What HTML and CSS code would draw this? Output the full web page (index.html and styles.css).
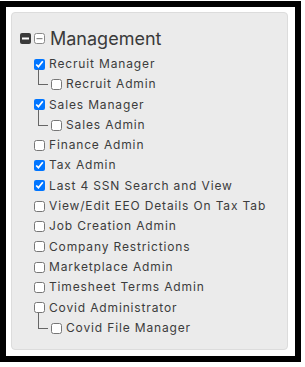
FILE: index.html
```html
<!DOCTYPE html>
<html lang="en">
<head>
    <meta charset="UTF-8">
    <title>Management</title>
    <link rel="stylesheet" href="styles.css">
</head>
<body>
    <div class="frame">
        <div class="panel">
            <div class="group-head">
                <span class="tog">
                    <svg width="11" height="11" viewBox="0 0 11 11"><rect x="0" y="0" width="11" height="11" rx="2" fill="#3a3a3a"/><rect x="2" y="4.5" width="7" height="2" fill="#fff"/></svg>
                </span>
                <span class="tog">
                    <svg width="11" height="11" viewBox="0 0 11 11"><rect x="0.5" y="0.5" width="10" height="10" rx="2" fill="#fff" stroke="#8a8a8a"/><rect x="2.5" y="5" width="6" height="1.2" fill="#8a8a8a"/></svg>
                </span>
                <span class="title">Management</span>
            </div>

            <ul class="perms">
                <li><label><input type="checkbox" checked>Recruit Manager</label>
                    <ul class="sub">
                        <li><label><input type="checkbox">Recruit Admin</label></li>
                    </ul>
                </li>
                <li><label><input type="checkbox" checked>Sales Manager</label>
                    <ul class="sub">
                        <li><label><input type="checkbox">Sales Admin</label></li>
                    </ul>
                </li>
                <li><label><input type="checkbox">Finance Admin</label></li>
                <li><label><input type="checkbox" checked>Tax Admin</label></li>
                <li><label><input type="checkbox" checked>Last 4 SSN Search and View</label></li>
                <li><label><input type="checkbox">View/Edit EEO Details On Tax Tab</label></li>
                <li><label><input type="checkbox">Job Creation Admin</label></li>
                <li><label><input type="checkbox">Company Restrictions</label></li>
                <li><label><input type="checkbox">Marketplace Admin</label></li>
                <li><label><input type="checkbox">Timesheet Terms Admin</label></li>
                <li><label><input type="checkbox">Covid Administrator</label>
                    <ul class="sub">
                        <li><label><input type="checkbox">Covid File Manager</label></li>
                    </ul>
                </li>
            </ul>
        </div>
    </div>
</body>
</html>
```

FILE: styles.css
```css
body {
    margin: 0;
    background-color: #fff;
    font-family: Inter, "Open Sans", sans-serif;
    color: #3c3c3c;
}
.frame {
    box-sizing: border-box;
    width: 301px;
    margin-top: 1px;
    border: 6px solid #000;
    padding: 5px 7px 6px 5px;
}
.panel {
    box-sizing: border-box;
    height: 338px;
    background-color: #ebebeb;
    border: 1px solid #dcdcdc;
    border-radius: 4px;
    padding: 14px 8px 0 8px;
}
.group-head {
    display: flex;
    align-items: center;
    gap: 2px;
    height: 22px;
}
.tog {
    display: flex;
    width: 11px;
    height: 11px;
    margin-right: 1px;
}
.title {
    font-size: 18px;
    margin-left: 2px;
    color: #3a3a3a;
}
.perms {
    list-style: none;
    margin: 5px 0 0 0;
    padding: 0 0 0 14px;
    font-size: 12px;
    letter-spacing: 0.85px;
}
.perms li {
    line-height: 20.3px;
}
.perms label {
    display: flex;
    align-items: center;
    white-space: nowrap;
}
.perms input {
    width: 11px;
    height: 11px;
    margin: 0 4px 0 0;
}
.sub {
    list-style: none;
    margin: 0;
    padding: 0 0 0 17px;
}
.sub li {
    position: relative;
}
.sub li::before {
    content: "";
    position: absolute;
    left: -13px;
    top: -5px;
    width: 9px;
    height: 15px;
    border-left: 1px solid #666;
    border-bottom: 1px solid #666;
}
```
